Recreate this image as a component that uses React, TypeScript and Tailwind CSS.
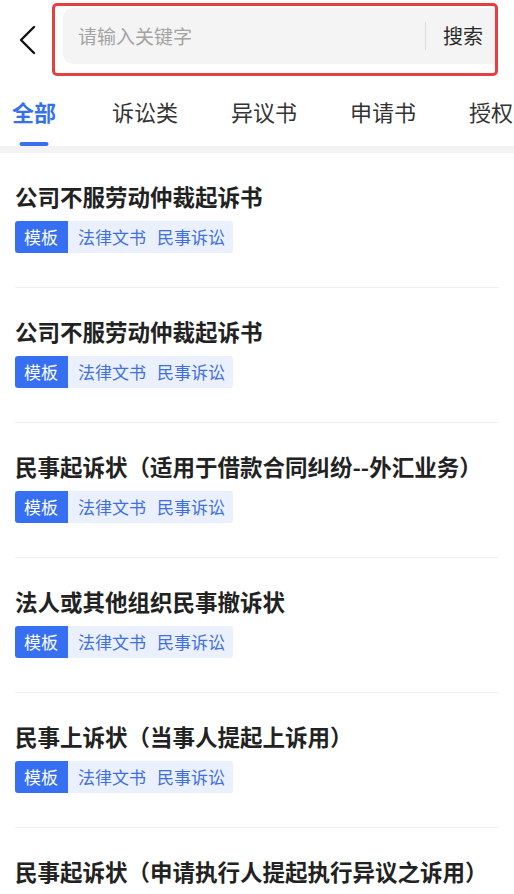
import React, { useState } from 'react';

type Doc = {
  id: number;
  title: string;
};

const tabs = ['全部', '诉讼类', '异议书', '申请书', '授权'];

const docs: Doc[] = [
  { id: 1, title: '公司不服劳动仲裁起诉书' },
  { id: 2, title: '公司不服劳动仲裁起诉书' },
  { id: 3, title: '民事起诉状（适用于借款合同纠纷--外汇业务）' },
  { id: 4, title: '法人或其他组织民事撤诉状' },
  { id: 5, title: '民事上诉状（当事人提起上诉用）' },
  { id: 6, title: '民事起诉状（申请执行人提起执行异议之诉用）' },
];

function BackIcon() {
  return (
    <svg width="20" height="30" viewBox="0 0 20 30" fill="none">
      <polyline
        points="16,2 3,15 16,28"
        stroke="#111"
        strokeWidth="2.4"
        strokeLinecap="round"
        strokeLinejoin="round"
      />
    </svg>
  );
}

function DocItem({ doc }: { doc: Doc }) {
  return (
    <div className="mx-[15px] border-b border-[#f0f0f0] pt-[28px] pb-[34px]">
      <div className="text-[22.5px] leading-[30px] font-bold text-[#222] whitespace-nowrap">
        {doc.title}
      </div>
      {/* 标签 */}
      <div className="mt-[10px] flex h-[32px] items-center">
        <span className="flex h-full items-center rounded-l-[3px] bg-[#366ff2] pl-[9px] pr-[10px] text-[17px] text-white">
          模板
        </span>
        <span className="flex h-full items-center gap-[11px] rounded-r-[3px] bg-[#eaf0fd] pl-[10px] pr-[8px] text-[17px] text-[#3e6fe6]">
          <span>法律文书</span>
          <span>民事诉讼</span>
        </span>
      </div>
    </div>
  );
}

export default function App() {
  const [active, setActive] = useState(0);
  const [keyword, setKeyword] = useState('');

  return (
    <div
      className="w-[514px] bg-white"
      style={{ fontFamily: '"Noto Sans CJK SC", "Noto Sans", sans-serif' }}
    >
      {/* 搜索栏 */}
      <div className="flex h-[76px] items-start pt-[3px]">
        <button className="flex h-[73px] w-[52px] items-center justify-center pl-[3px]">
          <BackIcon />
        </button>
        <div className="h-[73px] w-[446px] overflow-hidden rounded-[5px] border-[3px] border-[#e5403f] pl-[8px] pt-[2px]">
          <div className="flex h-[56px] items-center rounded-l-[10px] bg-[#f4f4f4]">
            <input
              value={keyword}
              onChange={(e) => setKeyword(e.target.value)}
              placeholder="请输入关键字"
              className="min-w-0 flex-1 bg-transparent pl-[15px] text-[19px] text-[#333] outline-none placeholder:text-[#a3a3a3]"
            />
            <div className="h-[28px] w-px bg-[#dcdcdc]" />
            <span className="pl-[17px] pr-[12px] text-[20px] text-[#2a2a2a]">搜索</span>
          </div>
        </div>
      </div>

      {/* 分类 */}
      <div className="flex h-[70px] items-center gap-[53px] overflow-hidden whitespace-nowrap pl-[12px]">
        {tabs.map((tab, i) => (
          <button
            key={tab}
            onClick={() => setActive(i)}
            className={`relative flex h-full shrink-0 items-center text-[22px] ${
              i === 0 ? 'mr-[3px]' : ''
            } ${active === i ? 'font-bold text-[#3470f0]' : 'text-[#333]'}`}
          >
            {tab}
            {active === i && (
              <span className="absolute bottom-0 left-1/2 h-[4px] w-[29px] -translate-x-1/2 rounded-full bg-[#3b6ff3]" />
            )}
          </button>
        ))}
      </div>
      <div className="h-[7px] bg-[#f3f3f3]" />

      {/* 列表 */}
      <div>
        {docs.map((doc) => (
          <DocItem key={doc.id} doc={doc} />
        ))}
      </div>
    </div>
  );
}
